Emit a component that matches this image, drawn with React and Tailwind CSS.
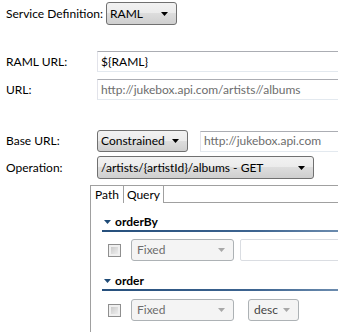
import React from 'react';

const font = { fontFamily: 'Lato, "Noto Sans", sans-serif' };

function Arrow({ disabled }) {
  return (
    <svg width="7" height="4" viewBox="0 0 7 4" className="shrink-0">
      <path d="M0 0h7L3.5 4z" fill={disabled ? '#a8a8a8' : '#000'} />
    </svg>
  );
}

function Combo({ value, className = '' }) {
  return (
    <div
      className={`flex items-center justify-between rounded-[3px] border border-[#707070] bg-[linear-gradient(#f2f2f2_0%,#ebebeb_50%,#dddddd_50%,#cfcfcf_100%)] pl-[3px] pr-[8px] text-black ${className}`}
    >
      <span className="whitespace-nowrap">{value}</span>
      <Arrow />
    </div>
  );
}

function DisabledCombo({ value, className = '' }) {
  return (
    <div
      className={`flex items-center justify-between rounded-[3px] border border-[#adb2b5] bg-[#f4f4f4] pl-[5px] pr-[8px] ${className}`}
    >
      <span className="whitespace-nowrap">{value}</span>
      <Arrow disabled />
    </div>
  );
}

function TextBox({ value, placeholder, className = '' }) {
  return (
    <div
      className={`flex items-center border border-t-[#abadb3] border-x-[#e2e3ea] border-b-[#e3e9ef] pl-[3px] ${className}`}
    >
      {value ? (
        <span className="text-black whitespace-nowrap">{value}</span>
      ) : (
        <span className="text-[#6d6d6d] whitespace-nowrap">{placeholder}</span>
      )}
    </div>
  );
}

function CheckBox() {
  return (
    <div className="ml-[17px] w-[13px] h-[13px] border border-[#8f8f8f] bg-[#f0f0f0] p-[2px]">
      <div className="w-full h-full bg-[linear-gradient(135deg,#cbcbcb,#ededed)]" />
    </div>
  );
}

function Section({ title, children }) {
  return (
    <div>
      <div className="ml-[13px] flex items-center gap-[4px] h-[17px]">
        <svg width="7" height="4" viewBox="0 0 7 4">
          <path d="M0 0h7L3.5 4z" fill="#1e4a76" />
        </svg>
        <span className="font-bold text-black">{title}</span>
      </div>
      <div className="ml-[11px] h-[2px] bg-[linear-gradient(90deg,#264f7c,#3e6591_60%,#7896b6)]" />
      {children}
    </div>
  );
}

export default function App() {
  return (
    <div className="w-[338px] h-[332px] overflow-hidden bg-white text-[12px] leading-none" style={font}>
      <div className="w-[360px]">
        <div className="mt-[2px] flex items-center h-[23px]">
          <span className="ml-[6px] w-[100px] whitespace-nowrap">Service Definition:</span>
          <Combo value="RAML" className="w-[71px] h-[23px]" />
        </div>

        <div className="mt-[26px] flex items-center h-[21px]">
          <span className="ml-[6px] w-[91px]">RAML URL:</span>
          <TextBox value="${RAML}" className="flex-1 h-[21px]" />
        </div>
        <div className="mt-[7px] flex items-center h-[21px]">
          <span className="ml-[6px] w-[91px]">URL:</span>
          <TextBox placeholder="http://jukebox.api.com/artists//albums" className="flex-1 h-[21px]" />
        </div>

        <div className="mt-[30px] flex items-center h-[22px]">
          <span className="ml-[6px] w-[91px]">Base URL:</span>
          <Combo value="Constrained" className="w-[91px] h-[22px]" />
          <TextBox placeholder="http://jukebox.api.com" className="ml-[12px] flex-1 h-[21px]" />
        </div>
        <div className="mt-[4px] flex items-center h-[23px]">
          <span className="ml-[6px] w-[91px]">Operation:</span>
          <Combo value="/artists/{artistId}/albums - GET" className="w-[217px] h-[23px]" />
        </div>

        <div className="ml-[90px] mt-[6px] border-l border-t border-[#a0a0a0] h-[200px]">
          <div className="flex h-[17px]">
            <div className="flex items-center px-[4px] border-r border-[#a0a0a0]">Path</div>
            <div className="flex items-center px-[3px] border-r border-[#a0a0a0]">Query</div>
            <div className="flex-1 border-b border-[#a0a0a0]" />
          </div>

          <div className="pt-[10px]">
            <Section title="orderBy">
              <div className="mt-[7px] flex items-center h-[22px]">
                <CheckBox />
                <DisabledCombo value="Fixed" className="ml-[10px] w-[103px] h-[22px] text-[#6d6d6d]" />
                <div className="ml-[6px] flex-1 h-[22px] rounded-[2px] border border-[#dadde2] bg-white" />
              </div>
            </Section>
            <div className="mt-[11px]">
              <Section title="order">
                <div className="mt-[8px] flex items-center h-[22px]">
                  <CheckBox />
                  <DisabledCombo value="Fixed" className="ml-[10px] w-[103px] h-[22px] text-[#6d6d6d]" />
                  <DisabledCombo value="desc" className="ml-[14px] w-[51px] h-[22px] text-[#444]" />
                </div>
              </Section>
            </div>
          </div>
        </div>
      </div>
    </div>
  );
}
